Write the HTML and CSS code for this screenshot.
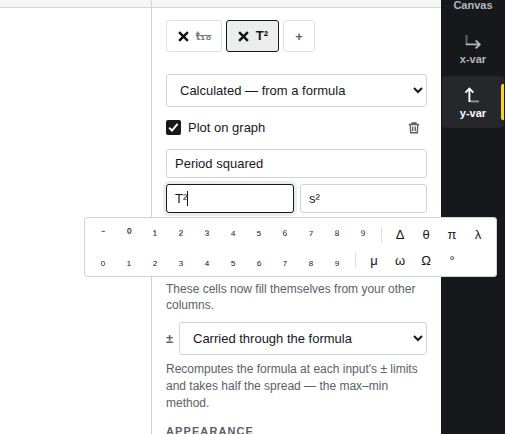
FILE: index.html
```html
<!DOCTYPE html>
<html lang="en">
<head>
<meta charset="utf-8">
<title>Variable editor</title>
<link rel="stylesheet" href="styles.css">
</head>
<body>
<div class="app">
  <div class="canvas"><div class="strip"></div></div>
  <main class="panel">
    <div class="strip"></div>
    <div class="content">
      <div class="tabs">
        <button class="tab tab-x"><svg class="cross" viewBox="0 0 10 10"><path d="M1 1L9 9M9 1L1 9"/></svg><s>t₁₀</s></button>
        <button class="tab tab-y active"><svg class="cross" viewBox="0 0 10 10"><path d="M1 1L9 9M9 1L1 9"/></svg><span class="sym">T²</span></button>
        <button class="tab add">+</button>
      </div>
      <select class="field kind"><option>Calculated — from a formula</option></select>
      <div class="plot">
        <label><span class="check"><svg viewBox="0 0 15 15"><path d="M3.2 7.8L6 10.6L11.6 3.8"/></svg></span>Plot on graph</label>
        <svg class="trash" viewBox="0 0 12 12"><path d="M.8 2.5H11.2M4 2.3V1H8V2.3M2.2 2.8L2.7 10.8H9.3L9.8 2.8M4.7 4.5V9M7.3 4.5V9"/></svg>
      </div>
      <div class="field name">Period squared</div>
      <div class="pair">
        <div class="field focus">T²<span class="caret"></span></div>
        <div class="field unit">s²</div>
      </div>
      <p class="hint cells">These cells now fill themselves from your other columns.</p>
      <div class="error-row"><span class="pm">±</span><select class="field"><option>Carried through the formula</option></select></div>
      <p class="hint method">Recomputes the formula at each input's ± limits and takes half the spread — the max–min method.</p>
      <h2>APPEARANCE</h2>
    </div>
  </main>
  <nav class="rail">
    <div class="item first"><span>Canvas</span></div>
    <div class="item"><svg viewBox="0 0 18 18"><path class="dim" d="M2.5 4V14"/><path d="M2 13.4H15.6M11.7 9.4L15.7 13.4L11.7 17.4"/></svg><span>x-var</span></div>
    <div class="item on"><svg viewBox="0 0 18 18"><path class="dim" d="M6 16.4H15"/><path d="M5.4 17V3.6M1.4 7.6L5.4 3.6L9.4 7.6"/></svg><span>y-var</span></div>
  </nav>
</div>
<div class="keys">
  <div class="row"><b>⁻</b><b>⁰</b><b>¹</b><b>²</b><b>³</b><b>⁴</b><b>⁵</b><b>⁶</b><b>⁷</b><b>⁸</b><b>⁹</b><i></i><b>Δ</b><b>θ</b><b>π</b><b>λ</b></div>
  <div class="row"><b>₀</b><b>₁</b><b>₂</b><b>₃</b><b>₄</b><b>₅</b><b>₆</b><b>₇</b><b>₈</b><b>₉</b><i></i><b>μ</b><b>ω</b><b>Ω</b><b>°</b></div>
</div>
</body>
</html>
```
FILE: styles.css
```css
* { box-sizing: border-box; }
body { margin: 0; overflow: hidden; background: #fff; color: #17181c; font: 13px "Liberation Sans", Arial, sans-serif; }
.app { display: flex; height: 434px; overflow: hidden; }
.canvas { width: 151px; }
.strip { height: 8px; background: #f6f6f6; border-bottom: 1px solid #d4d5d7; }
.panel { width: 290px; border-left: 1px solid #d0d3d6; }
.content { padding: 12px 14px 0; }
.tabs { display: flex; gap: 4px; }
.tab { height: 32px; padding: 0; display: flex; align-items: center; justify-content: center; gap: 7px; border: 1px solid #e0e2e2; border-radius: 3px; background: #fff; color: #17181c; font: bold 13px "Liberation Sans", Arial, sans-serif; }
.tab-x { width: 56px; padding-left: 1px; }
.tab-x s { color: #747a7e; padding-bottom: 1px; }
.sym { padding-bottom: 1px; }
.tab-y { width: 53px; padding-left: 1px; }
.tab.active { border-color: #17181c; background: #eceeee; }
.add { width: 32px; color: #5c6166; }
.cross { width: 11px; height: 11px; fill: none; stroke: #111; stroke-width: 2.2; }
.field { display: flex; align-items: center; width: 100%; height: 29px; padding: 0 8px; border: 1px solid #d0d4d6; border-radius: 3px; background: #fff; color: #17181c; font: 13px "Liberation Sans", Arial, sans-serif; }
select.field { display: block; height: 33px; padding: 0 0 0 9px; }
.kind { margin-top: 22px; }
.plot { display: flex; align-items: center; justify-content: space-between; height: 42px; padding-right: 7px; }
.plot label { display: flex; align-items: center; gap: 7px; margin-top: -1px; }
.check { width: 15px; height: 15px; border-radius: 2px; background: #17181c; }
.check svg { display: block; fill: none; stroke: #fff; stroke-width: 2; }
.trash { width: 12px; height: 12px; fill: none; stroke: #5c6166; stroke-width: 1.4; }
.pair { display: flex; gap: 6px; margin-top: 6px; }
.focus { width: 128px; border-color: #17181c; box-shadow: 0 0 0 3px #eceeee; }
.unit { width: 127px; }
.caret { width: 1px; height: 15px; background: #17181c; }
.hint { margin: 0; color: #5c6166; font-size: 12px; line-height: 17px; }
.cells { margin-top: 68px; line-height: 16px; }
.error-row { display: flex; align-items: center; gap: 6px; margin-top: 9px; }
.error-row .field { width: 248px; }
.pm { width: 7px; color: #5c6166; font-weight: bold; }
.method { margin-top: 6px; }
h2 { margin: 13px 0 0; color: #5c6166; font-size: 11px; line-height: 13px; letter-spacing: 1.1px; }
.rail { width: 64px; padding: 0 1px 0 1px; background: #17181c; }
.item { position: relative; display: flex; flex-direction: column; align-items: center; width: 62px; height: 52px; margin-bottom: 2px; padding-top: 9px; border-radius: 4px; color: #b6b7ba; font-size: 11px; font-weight: bold; line-height: 13px; }
.item svg { width: 18px; height: 18px; margin-bottom: 4px; fill: none; stroke: currentColor; stroke-width: 1.9; }
.item .dim { opacity: .5; }
.first { height: 20px; padding: 0; }
.first span { margin-top: -1px; }
.on { background: #26272b; color: #fff; }
.on::after { content: ""; position: absolute; right: 0; top: 8px; width: 3px; height: 36px; border-radius: 2px 0 0 2px; background: #ffd60a; }
.keys { position: absolute; left: 84px; top: 217px; width: 413px; height: 60px; padding: 3px 5px; border: 1px solid #d0d4d6; border-radius: 3px; background: #fff; }
.row { display: flex; align-items: center; height: 26px; }
.row b { width: 26px; padding-top: 2px; text-align: center; font-weight: normal; line-height: 26px; }
.row i { width: 1px; height: 16px; margin: 0 5px; background: #dcdfe0; }
```
